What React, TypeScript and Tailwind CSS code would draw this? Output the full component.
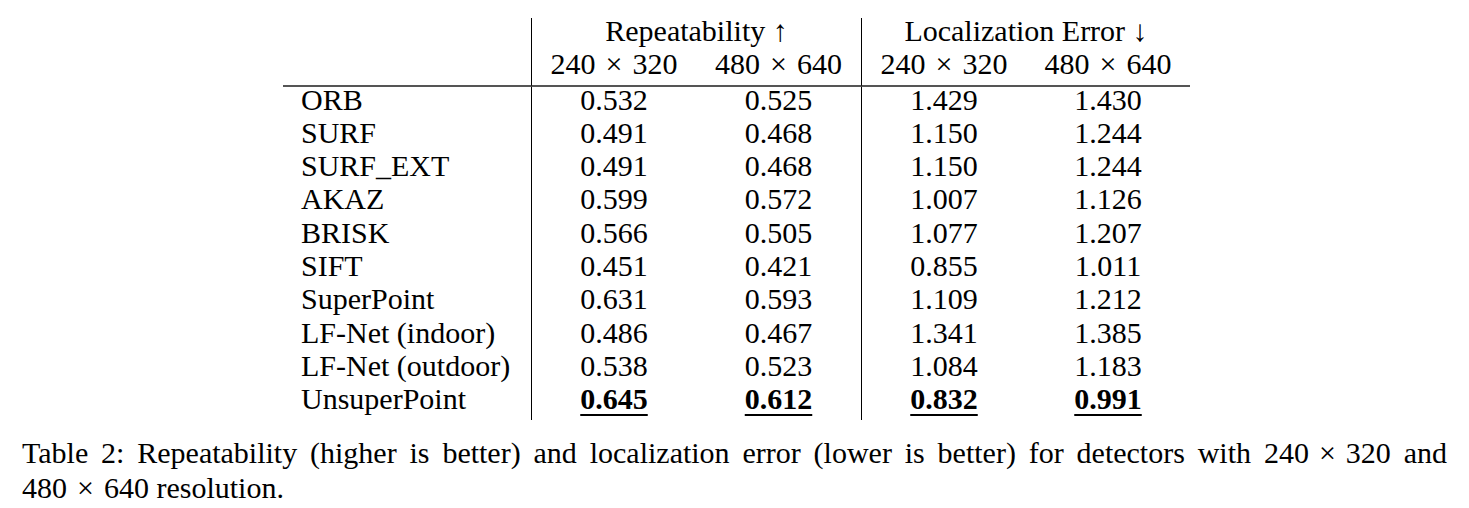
const rows: { name: string; v: string[]; best?: boolean }[] = [
  { name: "ORB", v: ["0.532", "0.525", "1.429", "1.430"] },
  { name: "SURF", v: ["0.491", "0.468", "1.150", "1.244"] },
  { name: "SURF_EXT", v: ["0.491", "0.468", "1.150", "1.244"] },
  { name: "AKAZ", v: ["0.599", "0.572", "1.007", "1.126"] },
  { name: "BRISK", v: ["0.566", "0.505", "1.077", "1.207"] },
  { name: "SIFT", v: ["0.451", "0.421", "0.855", "1.011"] },
  { name: "SuperPoint", v: ["0.631", "0.593", "1.109", "1.212"] },
  { name: "LF-Net (indoor)", v: ["0.486", "0.467", "1.341", "1.385"] },
  { name: "LF-Net (outdoor)", v: ["0.538", "0.523", "1.084", "1.183"] },
  { name: "UnsuperPoint", v: ["0.645", "0.612", "0.832", "0.991"], best: true },
];

const serif = "font-['Liberation_Serif','Times_New_Roman',serif]";

// cells: 33.3px tall, text nudged ~4px up like the LaTeX table
const cell = "leading-[25px] pb-[8.3px]";

function cn(...parts: (string | false | undefined)[]) {
  return parts.filter(Boolean).join(" ");
}

/** "a × b" with the wider spacing of a math binary operator (no real spaces, so justify leaves it alone) */
function Dim({ a, b }: { a: string; b: string }) {
  return (
    <span className="whitespace-nowrap">
      {a}
      <span className="mx-[10px]">×</span>
      {b}
    </span>
  );
}

export default function App() {
  return (
    <div className={cn("min-h-[508px] w-[1469px] bg-white pt-[18px] text-black", serif)}>
      <div className="ml-[283px] grid w-[907px] grid-cols-[248px_165px_165px_165px_164px] text-[30px]">
        {/* header row 1 */}
        <div />
        <div className={cn("col-span-2 border-l border-black text-center", cell)}>
          Repeatability ↑
        </div>
        <div className={cn("col-span-2 border-l border-black text-center", cell)}>
          Localization Error ↓
        </div>

        {/* header row 2 */}
        <div className="border-b-2 border-[#555]" />
        {[
          ["240", "320"],
          ["480", "640"],
          ["240", "320"],
          ["480", "640"],
        ].map(([a, b], i) => (
          <div
            key={i}
            className={cn(
              "border-b-2 border-[#555] text-center",
              cell,
              i % 2 === 0 && "border-l border-l-black",
            )}
          >
            <Dim a={a} b={b} />
          </div>
        ))}

        {rows.map((r) => (
          <Row key={r.name} r={r} />
        ))}
      </div>

      <p className="mx-[22px] mt-[15px] text-justify text-[30px] leading-[35px] [text-align-last:left]">
        Table 2: Repeatability (higher is better) and localization error (lower is better) for
        detectors with <Dim a="240" b="320" /> and <Dim a="480" b="640" /> resolution.
      </p>
    </div>
  );
}

function Row({ r }: { r: { name: string; v: string[]; best?: boolean } }) {
  return (
    <>
      <div className={cn("pl-[18px] whitespace-nowrap", cell)}>{r.name}</div>
      {r.v.map((x, i) => (
        <div key={i} className={cn("text-center", cell, i % 2 === 0 && "border-l border-black")}>
          {r.best ? (
            <span className="font-bold underline decoration-2 underline-offset-[5px]">{x}</span>
          ) : (
            x
          )}
        </div>
      ))}
    </>
  );
}
